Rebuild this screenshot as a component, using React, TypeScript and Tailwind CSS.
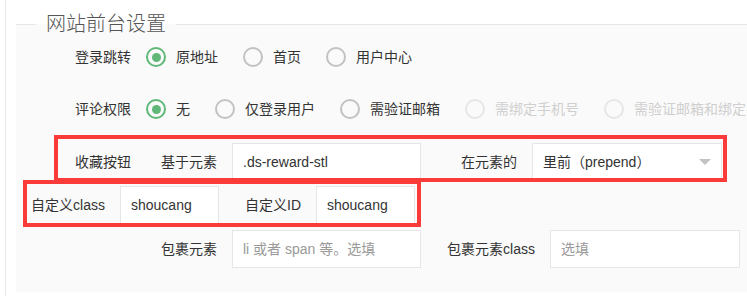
import React from 'react';

const font = { fontFamily: '"Liberation Sans", "Noto Sans CJK SC", sans-serif' };

interface RadioOption {
  label: string;
  checked?: boolean;
  disabled?: boolean;
}

function Radio({ label, checked, disabled }: RadioOption) {
  return (
    <div className="flex items-center mr-[25px] shrink-0">
      <span
        className={`w-[20px] h-[20px] rounded-full border-2 flex items-center justify-center shrink-0 ${
          checked ? 'border-[#5FB878]' : disabled ? 'border-[#e6e6e6]' : 'border-[#c2c2c2]'
        }`}
      >
        {checked && <span className="w-[9px] h-[9px] rounded-full bg-[#5FB878]" />}
      </span>
      <span className={`ml-[10px] ${disabled ? 'text-[#cfcfcf]' : 'text-[#333]'}`}>{label}</span>
    </div>
  );
}

function TextInput({ width, value, placeholder }: { width: string; value?: string; placeholder?: string }) {
  return (
    <input
      readOnly
      defaultValue={value}
      placeholder={placeholder}
      style={font}
      className={`${width} h-[38px] shrink-0 border border-[#e6e6e6] bg-white px-[10px] text-[14px] text-[#333] placeholder:text-[#999] outline-none`}
    />
  );
}

const loginOptions: RadioOption[] = [
  { label: '原地址', checked: true },
  { label: '首页' },
  { label: '用户中心' },
];

const commentOptions: RadioOption[] = [
  { label: '无', checked: true },
  { label: '仅登录用户' },
  { label: '需验证邮箱' },
  { label: '需绑定手机号', disabled: true },
  { label: '需验证邮箱和绑定手机号', disabled: true },
];

export default function App() {
  return (
    <div className="w-[747px] h-[296px] bg-white overflow-hidden flex text-[14px] text-[#333] whitespace-nowrap" style={font}>
      <div className="ml-[5px] h-full border-l border-[#e6e6e6] pl-[10px] flex-1 min-w-0">
        <fieldset className="mt-[10px] border-0 border-t border-[#e6e6e6] bg-[#fafafa] pb-[24px] min-w-0">
          <legend className="ml-[20px] px-[10px] text-[20px] leading-[28px] text-[#555] font-light">网站前台设置</legend>

          {/* 登录跳转 */}
          <div className="flex items-center h-[38px]">
            <label className="ml-[20px] w-[110px] pr-[15px] text-right shrink-0">登录跳转</label>
            {loginOptions.map((o) => (
              <Radio key={o.label} {...o} />
            ))}
          </div>

          {/* 评论权限 */}
          <div className="flex items-center h-[38px] mt-[14px]">
            <label className="ml-[20px] w-[110px] pr-[15px] text-right shrink-0">评论权限</label>
            {commentOptions.map((o) => (
              <Radio key={o.label} {...o} />
            ))}
          </div>

          {/* 收藏按钮 */}
          <div className="mt-[7px] ml-[38px] w-[673px] h-[47px] border-4 border-[#fb3a3a] overflow-hidden">
            <div className="flex items-center h-[38px] mt-[4px]">
              <label className="w-[88px] pr-[15px] text-right shrink-0">收藏按钮</label>
              <label className="w-[86px] pr-[15px] text-right shrink-0">基于元素</label>
              <TextInput width="w-[189px]" value=".ds-reward-stl" />
              <label className="w-[111px] pr-[15px] text-right shrink-0">在元素的</label>
              <div className="w-[190px] h-[38px] shrink-0 border border-[#e6e6e6] bg-white pl-[10px] pr-[10px] flex items-center justify-between">
                <span>里前（prepend）</span>
                <span className="w-0 h-0 border-x-[6px] border-x-transparent border-t-[6px] border-t-[#c2c2c2]" />
              </div>
            </div>
          </div>

          {/* 自定义 class / ID */}
          <div className="-mt-[2px] ml-[7px] w-[398px] h-[47px] border-4 border-[#fb3a3a] overflow-hidden">
            <div className="flex items-center h-[38px] mt-[2px]">
              <label className="w-[93px] pr-[15px] text-right shrink-0">自定义class</label>
              <TextInput width="w-[99px]" value="shoucang" />
              <label className="w-[97px] pr-[15px] text-right shrink-0">自定义ID</label>
              <TextInput width="w-[99px]" value="shoucang" />
            </div>
          </div>

          {/* 包裹元素 */}
          <div className="flex items-center h-[38px] mt-[3px]">
            <label className="w-[216px] pr-[15px] text-right shrink-0">包裹元素</label>
            <TextInput width="w-[189px]" placeholder="li 或者 span 等。选填" />
            <label className="w-[129px] pr-[15px] text-right shrink-0">包裹元素class</label>
            <TextInput width="w-[190px]" placeholder="选填" />
          </div>
        </fieldset>
      </div>
    </div>
  );
}
